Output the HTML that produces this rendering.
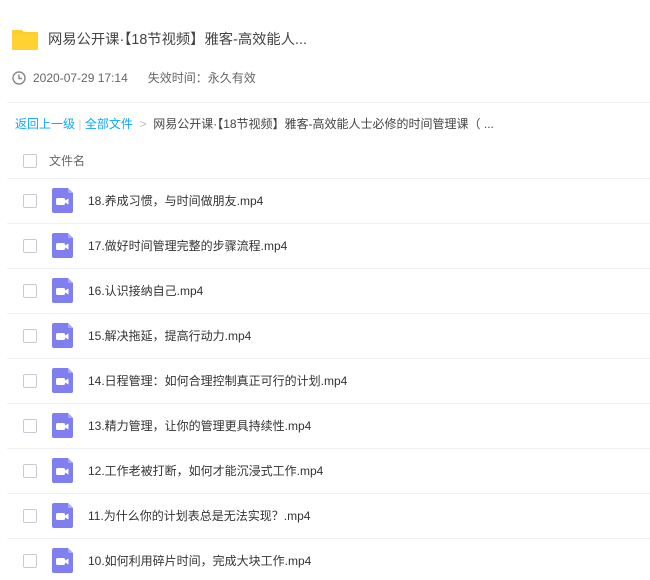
<!DOCTYPE html>
<html><head><meta charset="utf-8"><style>
*{margin:0;padding:0;box-sizing:border-box}
body{width:650px;height:580px;background:#fff;font-family:"Liberation Sans","Noto Sans CJK SC",sans-serif;position:relative;overflow:hidden;color:#333}
.abs{position:absolute;white-space:nowrap}
.title{left:48px;top:30px;font-size:14.3px;color:#444;line-height:20px}
.date{left:33px;top:70px;font-size:12px;color:#666;line-height:16px}
.line{position:absolute;left:7px;right:0;height:1px;background:#f1f2f5}
.bc{left:15px;top:116px;font-size:12px;line-height:16px;color:#444}
.bc a{color:#09aaff;text-decoration:none}
.cb{position:absolute;left:23px;width:14px;height:14px;border:1px solid #c5cad5;border-radius:2px;background:#fff}
.row-t{position:absolute;left:88px;font-size:12px;color:#333;line-height:16px;white-space:nowrap}
.ic{position:absolute;left:52px;width:21px;height:25px}
</style></head><body>
<svg class="abs" style="left:12px;top:29px" width="26" height="22" viewBox="0 0 26 22"><path d="M1 1h9l2 2h13a1 1 0 0 1 1 1v16a1 1 0 0 1-1 1H1a1 1 0 0 1-1-1V2a1 1 0 0 1 1-1z" fill="#ffcd2c"/><path d="M0 5h26v15a1 1 0 0 1-1 1H1a1 1 0 0 1-1-1z" fill="#ffd231"/></svg>
<div class="abs title">网易公开课·【18节视频】雅客-高效能人...</div>
<svg class="abs" style="left:12px;top:71px" width="14" height="14" viewBox="0 0 14 14"><circle cx="7" cy="7" r="6" fill="none" stroke="#888" stroke-width="1.4"/><path d="M7 3.5V7.5h3" fill="none" stroke="#888" stroke-width="1.4"/></svg>
<div class="abs date">2020-07-29 17:14&nbsp;&nbsp;&nbsp;&nbsp;&nbsp;&nbsp;失效时间：永久有效</div>
<div class="line" style="top:102px"></div>
<div class="abs bc"><a>返回上一级</a> <span style="color:#ccc">|</span> <a>全部文件</a> <span style="color:#bbb">&nbsp;&gt;&nbsp;</span> 网易公开课·【18节视频】雅客-高效能人士必修的时间管理课（ ...</div>
<div class="cb" style="top:154px"></div>
<div class="abs" style="left:49px;top:153px;font-size:12px;color:#666;line-height:16px">文件名</div>
<div class="line" style="top:178px"></div>
<div id="rows"></div>
<script>
var t=["18.养成习惯，与时间做朋友.mp4","17.做好时间管理完整的步骤流程.mp4","16.认识接纳自己.mp4","15.解决拖延，提高行动力.mp4","14.日程管理：如何合理控制真正可行的计划.mp4","13.精力管理，让你的管理更具持续性.mp4","12.工作老被打断，如何才能沉浸式工作.mp4","11.为什么你的计划表总是无法实现？.mp4","10.如何利用碎片时间，完成大块工作.mp4"];
var h="";
for(var i=0;i<t.length;i++){var c=201+45*i;
h+='<div class="cb" style="top:'+(c-7)+'px"></div>';
h+='<svg class="ic" style="top:'+(c-13)+'px" viewBox="0 0 21 25"><path d="M2 0h14l5 5v18a2 2 0 0 1-2 2H2a2 2 0 0 1-2-2V2a2 2 0 0 1 2-2z" fill="#7f7ff0"/><path d="M16 0v4a1 1 0 0 0 1 1h4z" fill="#a9a9f7"/><rect x="4" y="10" width="9" height="7" rx="1.5" fill="#fff"/><path d="M13 12.5l3.5-2v6l-3.5-2z" fill="#fff"/></svg>';
h+='<div class="row-t" style="top:'+(c-8)+'px">'+t[i]+'</div>';
if(i<8)h+='<div class="line" style="top:'+(c+22)+'px"></div>';}
document.getElementById("rows").innerHTML=h;
</script>
</body></html>
